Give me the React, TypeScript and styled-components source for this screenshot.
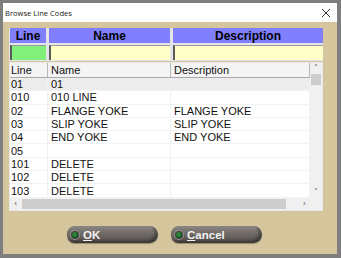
import React from "react";
import styled, { createGlobalStyle } from "styled-components";

const GlobalStyle = createGlobalStyle`
  html, body {
    margin: 0;
    padding: 0;
    background: #7c7c7c;
  }
  #root {
    width: 341px;
    height: 258px;
  }
`;

const rows = [
  { line: "01", name: "01", desc: "", selected: true },
  { line: "010", name: "010 LINE", desc: "" },
  { line: "02", name: "FLANGE YOKE", desc: "FLANGE YOKE" },
  { line: "03", name: "SLIP YOKE", desc: "SLIP YOKE" },
  { line: "04", name: "END YOKE", desc: "END YOKE" },
  { line: "05", name: "", desc: "" },
  { line: "101", name: "DELETE", desc: "" },
  { line: "102", name: "DELETE", desc: "" },
  { line: "103", name: "DELETE", desc: "" },
];

const Window = styled.div`
  width: 341px;
  height: 258px;
  box-sizing: border-box;
  border-style: solid;
  border-color: #7e7e7e;
  border-width: 3px 4px 4px 3px;
  background: #d5c69e;
  display: flex;
  flex-direction: column;
  font-family: "Liberation Sans", Arial, sans-serif;
`;

const TitleBar = styled.div`
  height: 19px;
  background: #ffffff;
  display: flex;
  align-items: center;
  justify-content: space-between;
  padding: 0 6px 0 2px;
  font-family: "Open Sans", "Liberation Sans", sans-serif;
  font-size: 7.6px;
  color: #1a1a1a;
`;

const Body = styled.div`
  flex: 1;
  display: flex;
  flex-direction: column;
  padding: 6px 14px 0 6px;
`;

const FilterTable = styled.div`
  display: grid;
  grid-template-columns: 36px 121px 1fr;
  column-gap: 3px;
  row-gap: 2px;
  background: #e4e4e8;
  padding: 0 0 1px 1px;
`;

const HeadCell = styled.div`
  height: 15px;
  background: #8080ff;
  color: #000;
  font-weight: bold;
  font-size: 12px;
  display: flex;
  align-items: center;
  justify-content: center;
`;

const InputCell = styled.div<{ $green?: boolean }>`
  height: 15px;
  box-sizing: border-box;
  background: ${(p) => (p.$green ? "#80f07a" : "#ffffc8")};
  border-left: 2px solid #5a5a5a;
  border-top: 1px solid #9a9a9a;
`;

const Grid = styled.div`
  margin-top: 1px;
  height: 149px;
  box-sizing: border-box;
  border: 1px solid #e8e8e8;
  background: #ffffff;
  display: grid;
  grid-template-columns: 1fr 12px;
  grid-template-rows: 1fr 12px;
  font-size: 11px;
  color: #111;
`;

const Rows = styled.div`
  overflow: hidden;
`;

const Row = styled.div<{ $head?: boolean; $selected?: boolean }>`
  display: grid;
  grid-template-columns: 38px 123px 1fr;
  height: ${(p) => (p.$head ? "15px" : "13.3px")};
  background: ${(p) => (p.$head ? "#f4f4f4" : p.$selected ? "#ececec" : "#ffffff")};
  border-bottom: 1px solid ${(p) => (p.$head ? "#a8a8a8" : "#f2f2f2")};
  box-sizing: border-box;
`;

const Cell = styled.div<{ $head?: boolean }>`
  padding-left: 3px;
  display: flex;
  align-items: center;
  white-space: nowrap;
  border-right: 1px solid ${(p) => (p.$head ? "#b8b8b8" : "#f0f0f0")};
  &:first-child {
    padding-left: 1px;
  }
`;

const VScroll = styled.div`
  background: #f0f0f0;
  display: flex;
  flex-direction: column;
  align-items: center;
  justify-content: space-between;
  padding: 2px 0 1px;
`;

const VTop = styled.div`
  display: flex;
  flex-direction: column;
  align-items: center;
`;

const Thumb = styled.div`
  width: 10px;
  height: 11px;
  background: #cdcdcd;
  margin-top: 1px;
`;

const Arrow = styled.span`
  font-size: 8px;
  color: #606060;
  line-height: 8px;
  font-family: "DejaVu Sans", sans-serif;
`;

const HScroll = styled.div`
  background: #f0f0f0;
  display: flex;
  align-items: center;
  padding: 0 4px;
  gap: 5px;
`;

const HThumb = styled.div`
  flex: 1;
  height: 10px;
  background: #cdcdcd;
  margin-right: 12px;
`;

const Corner = styled.div`
  background: #f0f0f0;
`;

const Spacer = styled.div`
  flex: 1;
  display: flex;
  flex-direction: column;
`;

const Buttons = styled.div`
  display: flex;
  justify-content: center;
  gap: 13px;
  margin-top: 15px;
  padding-right: 3px;
`;

const Button = styled.div`
  width: 91px;
  height: 17px;
  border-radius: 9px 10px 10px 9px;
  background: linear-gradient(180deg, #8d8883 0%, #726d68 40%, #524d49 100%);
  box-shadow: inset -3px -2px 3px rgba(0, 0, 0, 0.35), 0 1px 1px rgba(0, 0, 0, 0.3);
  display: flex;
  align-items: center;
  padding-left: 5px;
  gap: 5px;
  box-sizing: border-box;
  color: #f2f2f2;
  font-weight: bold;
  font-size: 11.5px;
  u {
    text-decoration-thickness: 1px;
  }
`;

const Led = styled.span`
  width: 6px;
  height: 6px;
  border-radius: 50%;
  background: radial-gradient(circle at 45% 40%, #3a9a45 0%, #166020 60%, #0a2a10 100%);
  box-shadow: 0 0 0 1px #3a3a3a, 0 0 0 2px #9a9590;
`;

export default function App() {
  return (
    <>
      <GlobalStyle />
      <Window>
        <TitleBar>
          <span>Browse Line Codes</span>
          <svg width="10" height="10" viewBox="0 0 10 10">
            <path d="M1 1L9 9M9 1L1 9" stroke="#333" strokeWidth="1" />
          </svg>
        </TitleBar>
        <Body>
          <FilterTable>
            <HeadCell>Line</HeadCell>
            <HeadCell>Name</HeadCell>
            <HeadCell>Description</HeadCell>
            <InputCell $green />
            <InputCell />
            <InputCell />
          </FilterTable>
          <Grid>
            <Rows>
              <Row $head>
                <Cell $head>Line</Cell>
                <Cell $head>Name</Cell>
                <Cell $head>Description</Cell>
              </Row>
              {rows.map((r) => (
                <Row key={r.line} $selected={r.selected}>
                  <Cell>{r.line}</Cell>
                  <Cell>{r.name}</Cell>
                  <Cell>{r.desc}</Cell>
                </Row>
              ))}
            </Rows>
            <VScroll>
              <VTop>
                <Arrow>˄</Arrow>
                <Thumb />
              </VTop>
              <Arrow>˅</Arrow>
            </VScroll>
            <HScroll>
              <Arrow>‹</Arrow>
              <HThumb />
              <Arrow>›</Arrow>
            </HScroll>
            <Corner />
          </Grid>
          <Spacer>
            <Buttons>
              <Button>
                <Led />
                <span>
                  <u>O</u>K
                </span>
              </Button>
              <Button>
                <Led />
                <span>
                  <u>C</u>ancel
                </span>
              </Button>
            </Buttons>
          </Spacer>
        </Body>
      </Window>
    </>
  );
}
